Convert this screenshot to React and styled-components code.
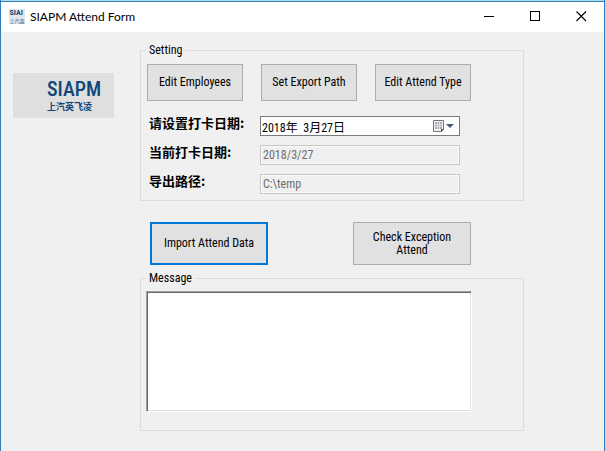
import React from "react";
import styled, { createGlobalStyle, css } from "styled-components";

const Global = createGlobalStyle`
  *, *::before, *::after { box-sizing: border-box; }
  body {
    margin: 0;
    background: #f0f0f0;
    font-family: "Roboto Condensed", "Liberation Sans Narrow", "Noto Sans CJK SC", sans-serif;
    font-size: 12px;
    line-height: 13px;
    color: #000;
  }
  button, input, textarea { font: inherit; border-radius: 0; margin: 0; }
`;

const Window = styled.div`
  display: flex;
  flex-direction: column;
  min-height: 100vh;
  border: solid #2f7fbf;
  border-width: 0 1px;
`;

const TitleBar = styled.header`
  display: flex;
  align-items: center;
  height: 32px;
  padding-left: 8px;
  border-top: 1px solid #a5ddf5;
  background: #fff;
  box-shadow: inset 0 1px 0 #3a7fae;
`;

const AppIcon = styled.span`
  display: grid;
  justify-content: center;
  width: 16px;
  height: 15px;
  margin-right: 5px;
  background: #dfe6ec;
  color: #1c4f7c;
  white-space: nowrap;
`;

const IconTop = styled.span`
  font: bold 8px/8px "Roboto Condensed", Roboto, sans-serif;
`;

const IconBottom = styled.span`
  font: 5px/7px "Noto Sans CJK SC", sans-serif;
`;

const Title = styled.h1`
  flex: 1;
  margin: 0;
  font: 12px/16px Lato, sans-serif;
`;

const CaptionButton = styled.button`
  display: grid;
  place-items: center;
  width: 46px;
  height: 28px;
  padding: 0;
  border: 0;
  background: transparent;
`;

const Body = styled.main`
  display: flex;
  align-items: flex-start;
  gap: 26px;
  padding: 12px 80px 20px 12px;
`;

const Logo = styled.div`
  flex: none;
  width: 101px;
  height: 45px;
  margin-top: 29px;
  padding: 5px 0 0 34px;
  background: #dfdfdf;
  color: #10467a;
`;

const LogoName = styled.div`
  font: 500 20px/22px "Roboto Condensed", "Liberation Sans Narrow", sans-serif;
`;

const LogoSub = styled.div`
  font: bold 9px/14px "Noto Sans CJK SC", sans-serif;
`;

const Form = styled.form`
  flex: 1;
  min-width: 0;
`;

const Group = styled.fieldset`
  min-width: 0;
  margin: 0;
  padding: ${(p) => p.$top}px 51px ${(p) => p.$bottom}px 5px;
  border: 1px solid #dcdcdc;
`;

const Legend = styled.legend`
  padding: 0 3px;
`;

const ButtonRow = styled.div`
  display: grid;
  grid-template-columns: repeat(3, 1fr);
  gap: 18px;
  margin: 0 1px;
`;

const ActionRow = styled.div`
  display: flex;
  justify-content: space-between;
  padding: 21px 53px 7px 10px;
`;

const PushButton = styled.button`
  height: 37px;
  padding: 0 4px;
  border: 1px solid #adadad;
  background: #e1e1e1;
  color: #000;
  ${(p) =>
    p.$large &&
    css`
      width: 118px;
      height: 43px;
      padding: 0 12px;
    `}
  ${(p) =>
    p.$primary &&
    css`
      padding: 0 4px;
      border: 2px solid #0078d7;
    `}
`;

const Fields = styled.div`
  display: grid;
  grid-template-columns: 111px 1fr;
  row-gap: 9px;
  margin: 15px 12px 0 3px;
`;

const Label = styled.label`
  font: bold 13px/13px "Noto Sans CJK SC", sans-serif;
`;

const TextField = styled.input`
  width: 100%;
  min-width: 0;
  height: 20px;
  padding: 0 2px;
  border: 1px solid #c8c8c8;
  background: #f0f0f0;
  box-shadow: inset 0 0 0 1px #fafafa;
  color: #6d6d6d;
  &:disabled { opacity: 1; }
`;

const DatePicker = styled.div`
  display: flex;
  align-items: center;
  height: 20px;
  border: 1px solid #7a7a7a;
  background: #fff;
`;

const DateInput = styled.input`
  flex: 1;
  min-width: 0;
  height: 18px;
  padding: 0 1px;
  border: 0;
  background: transparent;
  white-space: pre;
`;

const DropButton = styled.button`
  display: flex;
  align-items: center;
  width: 26px;
  height: 18px;
  padding: 0;
  border: 0;
  background: transparent;
`;

const MessageBox = styled.textarea`
  display: block;
  width: 100%;
  height: 121px;
  padding: 2px;
  border: 1px solid;
  border-color: #a0a0a0 #fff #fff #a0a0a0;
  background: #fff;
  box-shadow: inset 1px 1px 0 #696969, inset -1px -1px 0 #e0e0e0;
  resize: none;
`;

function MinimizeIcon() {
  return (
    <svg width="11" height="11" viewBox="0 0 11 11" aria-hidden="true">
      <path d="M0 5.5H10" stroke="#000" fill="none" />
    </svg>
  );
}

function MaximizeIcon() {
  return (
    <svg width="11" height="11" viewBox="0 0 11 11" aria-hidden="true">
      <rect x="0.5" y="0.5" width="9" height="9" stroke="#000" fill="none" />
    </svg>
  );
}

function CloseIcon() {
  return (
    <svg width="11" height="11" viewBox="0 0 11 11" aria-hidden="true">
      <path d="M0.5 0.5L10 10M10 0.5L0.5 10" stroke="#000" strokeWidth="1.1" fill="none" />
    </svg>
  );
}

function CalendarIcon() {
  return (
    <svg width="22" height="13" viewBox="0 0 22 13" aria-hidden="true">
      <path d="M0.5 0.5H10.5V9.5L8.5 11.5H0.5Z" fill="#f4f4f4" stroke="#777" />
      <path d="M2 2H9V9H2Z" fill="#a9afb9" />
      <path d="M2 4.5H9M2 6.5H9M4.5 2V9M6.5 2V9" stroke="#e8ebef" strokeWidth="0.7" />
      <path d="M8 12V9H11Z" fill="#555" />
      <path d="M13 4H21L17 8Z" fill="#44597b" />
    </svg>
  );
}

export default function App() {
  return (
    <>
      <Global />
      <Window>
        <TitleBar>
          <AppIcon aria-hidden="true">
            <IconTop>SIAI</IconTop>
            <IconBottom>上汽英</IconBottom>
          </AppIcon>
          <Title>SIAPM Attend Form</Title>
          <CaptionButton type="button" aria-label="Minimize"><MinimizeIcon /></CaptionButton>
          <CaptionButton type="button" aria-label="Maximize"><MaximizeIcon /></CaptionButton>
          <CaptionButton type="button" aria-label="Close"><CloseIcon /></CaptionButton>
        </TitleBar>
        <Body>
          <Logo>
            <LogoName>SIAPM</LogoName>
            <LogoSub>上汽英飞凌</LogoSub>
          </Logo>
          <Form onSubmit={(e) => e.preventDefault()}>
            <Group $top={7} $bottom={6}>
              <Legend>Setting</Legend>
              <ButtonRow>
                <PushButton type="button">Edit Employees</PushButton>
                <PushButton type="button">Set Export Path</PushButton>
                <PushButton type="button">Edit Attend Type</PushButton>
              </ButtonRow>
              <Fields>
                <Label htmlFor="date">请设置打卡日期:</Label>
                <DatePicker>
                  <DateInput id="date" defaultValue="2018年  3月27日" />
                  <DropButton type="button" aria-label="Open calendar"><CalendarIcon /></DropButton>
                </DatePicker>
                <Label htmlFor="current">当前打卡日期:</Label>
                <TextField id="current" disabled defaultValue="2018/3/27" />
                <Label htmlFor="path">导出路径:</Label>
                <TextField id="path" disabled defaultValue="C:\temp" />
              </Fields>
            </Group>
            <ActionRow>
              <PushButton type="submit" $large $primary>Import Attend Data</PushButton>
              <PushButton type="button" $large>Check Exception Attend</PushButton>
            </ActionRow>
            <Group $top={6} $bottom={18}>
              <Legend id="message-title">Message</Legend>
              <MessageBox aria-labelledby="message-title" />
            </Group>
          </Form>
        </Body>
      </Window>
    </>
  );
}
